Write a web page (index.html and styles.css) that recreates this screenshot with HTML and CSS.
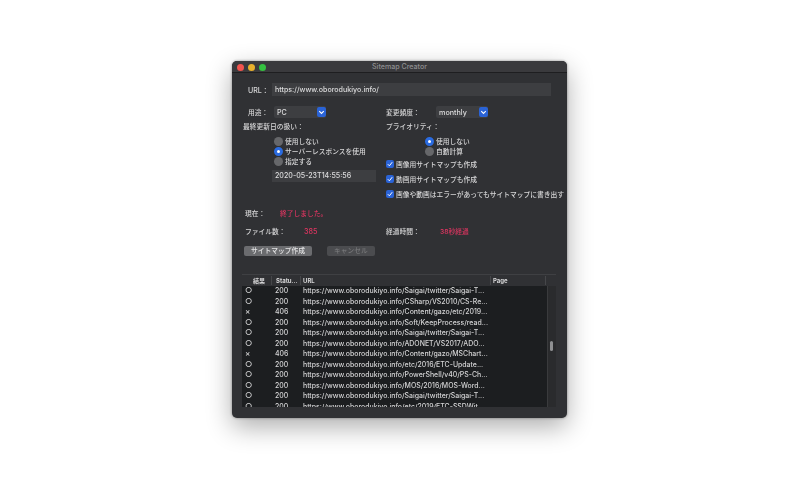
FILE: index.html
```html
<!DOCTYPE html>
<html lang="ja">
<head>
  <meta charset="UTF-8">
  <title>Sitemap Creator</title>
  <link rel="stylesheet" href="styles.css">
</head>
<body>
  <div class="window">
    <div class="titlebar">
      <div class="lights"><i class="red"></i><i class="yellow"></i><i class="green"></i></div>
      <span>Sitemap Creator</span>
    </div>

    <div class="url-row">
      <label>URL：</label>
      <div class="field url-field">https://www.oborodukiyo.info/</div>
    </div>

    <div class="columns">
      <div class="col col-left">
        <div class="select-row">
          <label class="use-label">用途：</label>
          <div class="select use-select"><span>PC</span><b><svg viewBox="0 0 8 8"><path d="M2 3.2 4 5.2 6 3.2"/></svg></b></div>
        </div>
        <div class="heading">最終更新日の扱い：</div>
        <div class="radios">
          <div class="radio"><i></i>使用しない</div>
          <div class="radio on"><i></i>サーバーレスポンスを使用</div>
          <div class="radio"><i></i>指定する</div>
        </div>
        <div class="field date-field">2020-05-23T14:55:56</div>
      </div>

      <div class="col col-right">
        <div class="select-row">
          <label class="freq-label">変更頻度：</label>
          <div class="select freq-select"><span>monthly</span><b><svg viewBox="0 0 8 8"><path d="M2 3.2 4 5.2 6 3.2"/></svg></b></div>
        </div>
        <div class="heading">プライオリティ：</div>
        <div class="radios radios-right">
          <div class="radio on"><i></i>使用しない</div>
          <div class="radio"><i></i>自動計算</div>
        </div>
        <div class="check"><i><svg viewBox="0 0 8 8"><path d="M1.8 4.2 3.4 5.8 6.2 2.2"/></svg></i>画像用サイトマップも作成</div>
        <div class="check"><i><svg viewBox="0 0 8 8"><path d="M1.8 4.2 3.4 5.8 6.2 2.2"/></svg></i>動画用サイトマップも作成</div>
        <div class="check"><i><svg viewBox="0 0 8 8"><path d="M1.8 4.2 3.4 5.8 6.2 2.2"/></svg></i>画像や動画はエラーがあってもサイトマップに書き出す</div>
      </div>
    </div>

    <div class="status-row">
      <label>現在：</label><span class="red-text">終了しました。</span>
    </div>
    <div class="count-row">
      <label class="count-label">ファイル数：</label><span class="red-text count-value">385</span>
      <label class="time-label">経過時間：</label><span class="red-text">38秒経過</span>
    </div>

    <div class="buttons">
      <button class="btn">サイトマップ作成</button>
      <button class="btn disabled">キャンセル</button>
    </div>

    <div class="table">
      <div class="thead">
        <span class="c-result">結果</span>
        <span class="c-status">Statu...</span>
        <span class="c-url">URL</span>
        <span class="c-page">Page</span>
        <span class="c-end"></span>
      </div>
      <div class="tbody">
        <div class="rows">
          <div class="row"><span class="c-result">○</span><span class="c-status">200</span><span class="c-url">https://www.oborodukiyo.info/Saigai/twitter/Saigai-T...</span></div>
          <div class="row"><span class="c-result">○</span><span class="c-status">200</span><span class="c-url">https://www.oborodukiyo.info/CSharp/VS2010/CS-Re...</span></div>
          <div class="row"><span class="c-result">×</span><span class="c-status">406</span><span class="c-url">https://www.oborodukiyo.info/Content/gazo/etc/2019...</span></div>
          <div class="row"><span class="c-result">○</span><span class="c-status">200</span><span class="c-url">https://www.oborodukiyo.info/Soft/KeepProcess/read...</span></div>
          <div class="row"><span class="c-result">○</span><span class="c-status">200</span><span class="c-url">https://www.oborodukiyo.info/Saigai/twitter/Saigai-T...</span></div>
          <div class="row"><span class="c-result">○</span><span class="c-status">200</span><span class="c-url">https://www.oborodukiyo.info/ADONET/VS2017/ADO...</span></div>
          <div class="row"><span class="c-result">×</span><span class="c-status">406</span><span class="c-url">https://www.oborodukiyo.info/Content/gazo/MSChart...</span></div>
          <div class="row"><span class="c-result">○</span><span class="c-status">200</span><span class="c-url">https://www.oborodukiyo.info/etc/2016/ETC-Update...</span></div>
          <div class="row"><span class="c-result">○</span><span class="c-status">200</span><span class="c-url">https://www.oborodukiyo.info/PowerShell/v40/PS-Ch...</span></div>
          <div class="row"><span class="c-result">○</span><span class="c-status">200</span><span class="c-url">https://www.oborodukiyo.info/MOS/2016/MOS-Word...</span></div>
          <div class="row"><span class="c-result">○</span><span class="c-status">200</span><span class="c-url">https://www.oborodukiyo.info/Saigai/twitter/Saigai-T...</span></div>
          <div class="row"><span class="c-result">○</span><span class="c-status">200</span><span class="c-url">https://www.oborodukiyo.info/etc/2019/ETC-SSDWit...</span></div>
        </div>
        <div class="scroll"><div class="thumb"></div></div>
      </div>
    </div>
  </div>
</body>
</html>
```

FILE: styles.css
```css
html,
body {
  margin: 0;
  height: 100%;
  background-color: #ffffff;
}
body {
  width: 800px;
  height: 500px;
  overflow: hidden;
  font-family: Inter, "Noto Sans CJK JP", sans-serif;
  font-size: 6.75px;
  font-weight: 500;
  color: #d6d6d7;
}
label {
  display: block;
}
.window {
  width: 335px;
  height: 357px;
  margin: 61px 0 0 232px;
  background-color: #303134;
  border-radius: 5px;
  box-shadow: 0 9px 26px rgba(0, 0, 0, 0.32), 0 0 3px rgba(0, 0, 0, 0.4);
  overflow: hidden;
  filter: blur(0.3px);
}
.titlebar {
  height: 12px;
  box-sizing: border-box;
  display: flex;
  align-items: center;
  justify-content: center;
  position: relative;
  background-color: #3a3a3d;
  border-bottom: 1px solid #1e1e20;
  color: #8e8e90;
  font-size: 7.1px;
}
.lights {
  position: absolute;
  left: 5px;
  top: 3px;
  display: flex;
  gap: 4px;
}
.lights i {
  width: 7px;
  height: 7px;
  border-radius: 50%;
}
.red { background-color: #f2544e; }
.yellow { background-color: #e8b02d; }
.green { background-color: #34c140; }

.field {
  background-color: #3d3e41;
  height: 12px;
  line-height: 12px;
  padding-left: 3px;
  box-sizing: border-box;
  color: #dcdcdd;
  font-size: 7.1px;
}
.url-row {
  display: flex;
  align-items: center;
  padding: 10px 0 0 16px;
}
.url-row label {
  width: 24px;
  font-size: 7.1px;
}
.url-field {
  width: 279px;
  height: 13px;
  line-height: 13px;
}
.columns {
  display: flex;
  margin-top: 10px;
}
.col-left {
  width: 154px;
  flex: none;
}
.select-row {
  display: flex;
  align-items: center;
  height: 12px;
}
.use-label {
  width: 26px;
  margin-left: 16px;
}
.freq-label {
  width: 50px;
}
.select {
  height: 12px;
  display: flex;
  justify-content: space-between;
  background-color: #3d3e41;
  border-radius: 2px;
  line-height: 13px;
  font-size: 7.2px;
  color: #dcdcdd;
}
.select span {
  padding-left: 3px;
}
.select b {
  width: 9px;
  height: 10px;
  margin-top: 1px;
  background-color: #2a63d6;
  border-radius: 2px;
}
.select svg,
.check svg {
  display: block;
  fill: none;
  stroke: #ffffff;
  stroke-width: 1;
}
.select svg {
  width: 9px;
  height: 10px;
}
.use-select {
  width: 52px;
}
.freq-select {
  width: 52px;
}
.heading {
  height: 10px;
  line-height: 10px;
  margin-top: 4px;
}
.col-left .heading {
  margin-left: 11px;
}
.radios {
  margin: 4px 0 0 42px;
}
.radios-right {
  margin-left: 39px;
}
.radio {
  display: flex;
  align-items: center;
  height: 10px;
  gap: 2px;
}
.radio i {
  width: 9px;
  height: 9px;
  border-radius: 50%;
  background-color: #66676a;
  box-sizing: border-box;
}
.radio.on i {
  background-color: #ffffff;
  border: 3px solid #2a6be0;
}
.date-field {
  width: 104px;
  margin: 4px 0 0 40px;
}
.check {
  display: flex;
  align-items: center;
  height: 10px;
  gap: 2px;
  margin-bottom: 5px;
  white-space: nowrap;
}
.radios-right + .check {
  margin-top: 3px;
}
.check i {
  width: 8px;
  height: 8px;
  background-color: #2a63d6;
  border-radius: 2px;
  flex: none;
}
.check svg {
  width: 8px;
  height: 8px;
}
.status-row,
.count-row {
  display: flex;
  align-items: center;
  height: 10px;
}
.status-row {
  margin: 4px 0 0 13px;
}
.status-row label {
  width: 35px;
}
.count-row {
  margin: 8px 0 0 13px;
}
.count-label {
  width: 59px;
}
.count-value {
  width: 82px;
  font-size: 7.2px;
}
.time-label {
  width: 54px;
}
.red-text {
  color: #dc3560;
}
.buttons {
  display: flex;
  gap: 15px;
  margin: 10px 0 0 12px;
}
.btn {
  height: 10px;
  width: 68px;
  padding: 0;
  border: 0;
  border-radius: 2px;
  background-color: #6b6c6f;
  color: #e4e4e5;
  font-family: inherit;
  font-size: 6.75px;
  font-weight: 500;
  line-height: 10px;
}
.btn.disabled {
  width: 48px;
  background-color: #4b4c4f;
  color: #77787a;
}
.table {
  width: 314px;
  margin: 18px 0 0 10px;
}
.thead {
  display: flex;
  height: 12px;
  box-sizing: border-box;
  border-top: 1px solid #3f4043;
  font-size: 6px;
  font-weight: 700;
  color: #d6d6d7;
}
.thead span {
  box-sizing: border-box;
  border-right: 1px solid #46474a;
  height: 9px;
  line-height: 9px;
  margin-top: 1px;
}
.thead .c-result {
  padding-left: 11px;
}
.c-result {
  width: 30px;
  flex: none;
}
.c-status {
  width: 29px;
  padding-left: 4px;
  flex: none;
  box-sizing: border-box;
}
.c-url {
  padding-left: 2px;
  white-space: nowrap;
}
.thead .c-url {
  width: 190px;
}
.thead .c-page {
  width: 55px;
  padding-left: 2px;
}
.thead .c-end {
  width: 10px;
  border-right: 0;
}
.tbody {
  display: flex;
  height: 121px;
  background-color: #1c1e20;
  overflow: hidden;
}
.rows {
  flex: 1;
  height: 121px;
  overflow: hidden;
}
.row {
  display: flex;
  height: 10.55px;
  line-height: 10.55px;
  font-size: 6.95px;
  color: #d4d4d5;
}
.row .c-result {
  padding-left: 3px;
  box-sizing: border-box;
  font-size: 8px;
  margin-top: -1px;
}
.row .c-status {
  padding-left: 3px;
}
.scroll {
  width: 9px;
  flex: none;
  padding-top: 55px;
  box-sizing: border-box;
  background-color: #2a2b2d;
  border-left: 1px solid #3a3b3d;
}
.thumb {
  width: 3px;
  height: 10px;
  margin-left: 2px;
  border-radius: 2px;
  background-color: #8f9092;
}
```
